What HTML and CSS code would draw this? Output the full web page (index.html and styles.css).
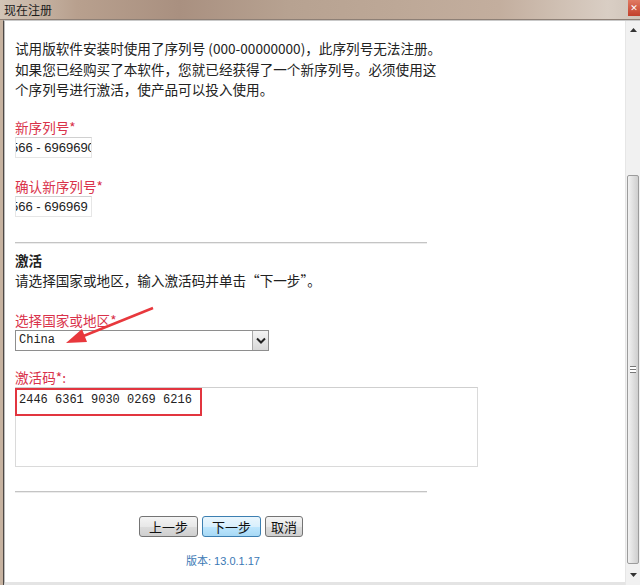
FILE: index.html
```html
<!DOCTYPE html>
<html lang="zh-CN">
<head>
    <meta charset="UTF-8">
    <meta name="viewport" content="width=device-width, initial-scale=1.0">
    <title>现在注册</title>
    <link rel="stylesheet" href="styles.css">
</head>
<body>
    <div class="window">
        <div class="titlebar">
            <span class="title">现在注册</span>
            <span class="close">&#x2715;</span>
        </div>

        <div class="frame">
            <div class="content">
                <p class="intro">试用版软件安装时使用了序列号 (000-00000000)，此序列号无法注册。<br>如果您已经购买了本软件，您就已经获得了一个新序列号。必须使用这<br>个序列号进行激活，使产品可以投入使用。</p>

                <div class="label first">新序列号*</div>
                <div class="field"><span class="shift">566 - 6969690</span></div>

                <div class="label">确认新序列号*</div>
                <div class="field"><span class="shift">566 - 696969</span></div>

                <div class="rule"></div>

                <div class="heading">激活</div>
                <div class="hint">请选择国家或地区，输入激活码并单击“下一步”。</div>

                <div class="label gap-lg">选择国家或地区*</div>
                <div class="select">
                    <span class="select-text">China</span>
                    <span class="select-btn">
                        <svg width="10" height="7" viewBox="0 0 10 7"><path d="M1 1.5 L5 5.5 L9 1.5" fill="none" stroke="#222" stroke-width="2"/></svg>
                    </span>
                </div>

                <div class="label gap-sm">激活码*:</div>
                <div class="textarea">
                    <span class="code">2446 6361 9030 0269 6216</span>
                    <span class="mark"></span>
                </div>

                <div class="rule second"></div>

                <div class="buttons">
                    <button class="btn">上一步</button>
                    <button class="btn active">下一步</button>
                    <button class="btn short">取消</button>
                </div>

                <div class="version">版本: 13.0.1.17</div>

                <!-- annotation arrow over the country select -->
                <svg class="arrow" width="95" height="50" viewBox="0 0 95 50">
                    <path d="M88 8 L16 37" stroke="#e8383d" stroke-width="2.5" fill="none"/>
                    <path d="M1 43 L17 29 L22 42 Z" fill="#e8383d"/>
                </svg>
            </div>

            <div class="scrollbar">
                <div class="sb-arrow up">
                    <svg width="7" height="4" viewBox="0 0 7 4"><path d="M0 4 L3.5 0 L7 4 Z" fill="#333"/></svg>
                </div>
                <div class="sb-track"></div>
                <div class="sb-thumb">
                    <span class="grip"></span>
                </div>
                <div class="sb-arrow down">
                    <svg width="7" height="4" viewBox="0 0 7 4"><path d="M0 0 L3.5 4 L7 0 Z" fill="#333"/></svg>
                </div>
            </div>
        </div>
    </div>
</body>
</html>
```

FILE: styles.css
```css
html, body {
    margin: 0;
    padding: 0;
    background: #fff;
}
body {
    font-family: "Noto Sans CJK SC", "Liberation Sans", sans-serif;
    color: #222;
    width: 640px;
    height: 585px;
    overflow: hidden;
}
.window {
    display: flex;
    flex-direction: column;
    height: 585px;
    background: #c6b2a0;
}
.titlebar {
    height: 19px;
    display: flex;
    align-items: center;
    justify-content: space-between;
    background: linear-gradient(90deg, #d3c5b7 0%, #b8a08e 12%, #a99080 28%, #b7a291 45%, #bda897 62%, #c3ae9e 78%, #d9cec4 95%, #cfc4ba 100%);
    border-bottom: 1px solid #8e8076;
}
.title {
    font-size: 12px;
    padding-left: 4px;
    color: #1b1b1b;
    line-height: 19px;
}
.close {
    width: 12px;
    height: 16px;
    align-self: flex-start;
    background: linear-gradient(#e07a62, #c2402c);
    color: #fff;
    font-size: 9px;
    line-height: 16px;
    text-align: center;
    font-family: "DejaVu Sans", sans-serif;
    overflow: hidden;
}
.frame {
    flex: 1;
    display: flex;
    margin-left: 3px;
    border-left: 1px solid #4d4845;
    border-top: 1px solid #c9c9c9;
    background: #fff;
}
.content {
    position: relative;
    flex: 1;
    padding: 17px 0 0 10px;
    border-left: 1px solid #bdbdbd;
    border-bottom: 3px solid #e4e4e4;
    font-size: 13.6px;
}
.intro {
    margin: 0;
    line-height: 20.5px;
}
.label {
    color: #d9324a;
    line-height: 20px;
    margin-top: 18px;
}
.label.first {
    margin-top: 17px;
}
.label.gap-lg {
    margin-top: 19px;
}
.label.gap-sm {
    margin-top: 16px;
}
.field {
    width: 75px;
    height: 19px;
    border: 1px solid #e6e6e6;
    border-top-color: #d0d0d0;
    overflow: hidden;
    white-space: nowrap;
    font-family: "Liberation Sans", sans-serif;
    font-size: 13px;
    line-height: 19px;
}
.shift {
    display: inline-block;
    margin-left: -5px;
}
.rule {
    width: 412px;
    height: 1px;
    background: #c4c4c4;
    border-bottom: 1px solid #ececec;
    margin-top: 25px;
}
.rule.second {
    margin-top: 24px;
}
.heading {
    font-weight: bold;
    line-height: 20px;
    margin-top: 6px;
}
.hint {
    line-height: 21px;
}
.select {
    display: flex;
    width: 252px;
    height: 19px;
    border: 1px solid #8e8e8e;
}
.select-text {
    flex: 1;
    font-family: "Liberation Mono", monospace;
    font-size: 12px;
    line-height: 19px;
    padding-left: 3px;
}
.select-btn {
    width: 15px;
    display: flex;
    align-items: center;
    justify-content: center;
    border-left: 1px solid #a8a8a8;
    background: linear-gradient(#f4f4f4, #d8d8d8);
}
.textarea {
    position: relative;
    width: 461px;
    height: 78px;
    border: 1px solid #dadada;
    border-top-color: #cfcfcf;
}
.code {
    display: block;
    font-family: "Liberation Mono", monospace;
    font-size: 12px;
    padding: 5px 0 0 3px;
}
.mark {
    position: absolute;
    left: -1px;
    top: 0;
    width: 183px;
    height: 24px;
    border: 2px solid #e2353f;
}
.buttons {
    display: flex;
    gap: 4px;
    margin: 23px 0 0 124px;
}
.btn {
    height: 21px;
    padding: 0 9px;
    font-family: "Noto Sans CJK SC", sans-serif;
    font-size: 13px;
    line-height: 17px;
    color: #111;
    border: 1px solid #747474;
    border-radius: 3px;
    background: linear-gradient(#f4f4f4 0%, #e8e8e8 50%, #dcdcdc 51%, #cfcfcf 100%);
}
.btn.active {
    border-color: #3c7fb1;
    background: linear-gradient(#eaf6fd 0%, #d9effc 50%, #bee6fd 51%, #a7d9f5 100%);
}
.btn.short {
    padding: 0 5px;
}
.version {
    margin: 15px 0 0 171px;
    font-family: "Liberation Sans", "Noto Sans CJK SC", sans-serif;
    font-size: 11px;
    color: #3a78b4;
}
.arrow {
    position: absolute;
    left: 60px;
    top: 279px;
}
.scrollbar {
    width: 14px;
    position: relative;
    background: #f1f1f1;
    border-left: 1px solid #e6e6e6;
    display: flex;
    flex-direction: column;
}
.sb-arrow {
    height: 17px;
    display: flex;
    align-items: center;
    justify-content: center;
}
.sb-arrow.down {
    height: 21px;
}
.sb-track {
    height: 137px;
}
.sb-thumb {
    flex: 1;
    margin: 0 1px;
    border: 1px solid #9c9c9c;
    border-radius: 2px;
    background: linear-gradient(90deg, #f2f2f2, #dcdcdc 60%, #cfcfcf);
    display: flex;
    align-items: center;
    justify-content: center;
}
.grip {
    width: 6px;
    height: 5px;
    border-top: 1px solid #777;
    border-bottom: 1px solid #777;
    background: linear-gradient(#fff 0 40%, #777 40% 60%, #fff 60%);
}
```
